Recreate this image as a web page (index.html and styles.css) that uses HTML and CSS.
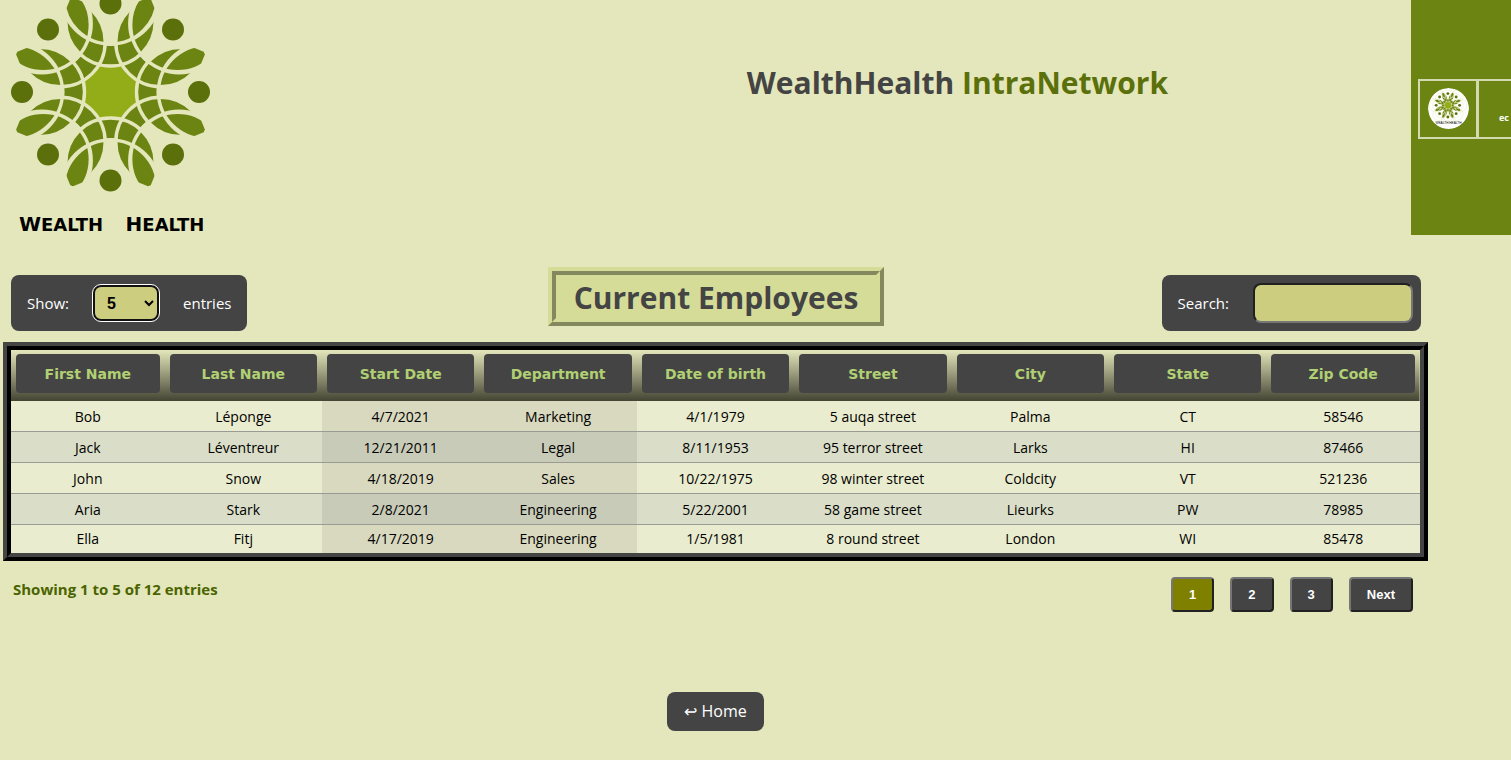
FILE: index.html
```html
<!DOCTYPE html>
<html lang="en">
<head>
<meta charset="utf-8">
<title>WealthHealth IntraNetwork</title>
<link rel="stylesheet" href="styles.css">
</head>
<body>
<header class="header">
  <svg class="logo" viewBox="0 0 220 235" role="img" aria-label="Wealth Health">
    <defs>
      <mask id="lune-mask">
        <circle cx="70.7" cy="0" r="44.7" fill="#fff"/>
        <circle cx="97" cy="0" r="51" fill="#000"/>
      </mask>
      <circle id="lune" cx="70.7" cy="0" r="44.7" mask="url(#lune-mask)"/>
      <circle id="ring-low" cx="70.7" cy="0" r="44.7"/>
      <circle id="ring-high" cx="95" cy="0" r="47"/>
      <path id="leaf" transform="rotate(22.5)" d="M58 0A47 47 0 0 0 93 10L101.500 1.500L101.500 -1.500L93 -10A47 47 0 0 0 58 0Z"/>
      <g id="flower">
        <circle r="29" fill="#93ad18"/>
        <g fill="#6c8512">
          <use href="#lune"/><use href="#lune" transform="rotate(45)"/><use href="#lune" transform="rotate(90)"/><use href="#lune" transform="rotate(135)"/><use href="#lune" transform="rotate(180)"/><use href="#lune" transform="rotate(225)"/><use href="#lune" transform="rotate(270)"/><use href="#lune" transform="rotate(315)"/>
        </g>
        <g class="flower-rings">
          <use href="#ring-low"/><use href="#ring-low" transform="rotate(45)"/><use href="#ring-low" transform="rotate(90)"/><use href="#ring-low" transform="rotate(135)"/><use href="#ring-low" transform="rotate(180)"/><use href="#ring-low" transform="rotate(225)"/><use href="#ring-low" transform="rotate(270)"/><use href="#ring-low" transform="rotate(315)"/>
        </g>
        <g fill="#6c8512">
          <use href="#leaf"/><use href="#leaf" transform="rotate(45)"/><use href="#leaf" transform="rotate(90)"/><use href="#leaf" transform="rotate(135)"/><use href="#leaf" transform="rotate(180)"/><use href="#leaf" transform="rotate(225)"/><use href="#leaf" transform="rotate(270)"/><use href="#leaf" transform="rotate(315)"/>
        </g>
        <g class="flower-rings">
          <use href="#ring-high"/><use href="#ring-high" transform="rotate(45)"/><use href="#ring-high" transform="rotate(90)"/><use href="#ring-high" transform="rotate(135)"/><use href="#ring-high" transform="rotate(180)"/><use href="#ring-high" transform="rotate(225)"/><use href="#ring-high" transform="rotate(270)"/><use href="#ring-high" transform="rotate(315)"/>
        </g>
        <g fill="#5b700b">
          <circle cx="88.5" r="11"/><circle cx="-88.5" r="11"/><circle cy="88.5" r="11"/><circle cy="-88.5" r="11"/>
          <circle cx="62.5" cy="62.5" r="11"/><circle cx="-62.5" cy="62.5" r="11"/><circle cx="62.5" cy="-62.5" r="11"/><circle cx="-62.5" cy="-62.5" r="11"/>
        </g>
      </g>
    </defs>
    <use href="#flower" x="110.5" y="92"/>
    <g class="wordmark">
      <text x="61" y="231">W<tspan class="small">EALTH</tspan></text>
      <text x="165" y="231">H<tspan class="small">EALTH</tspan></text>
    </g>
  </svg>
  <h1 class="site-title">WealthHealth <span class="accent">IntraNetwork</span></h1>
  <div class="banner">
    <div class="banner-cell">
      <svg class="badge" viewBox="-130 -130 260 260" aria-hidden="true">
        <circle r="130" fill="#fff"/>
        <use href="#flower" transform="translate(-4 -20) scale(.84)"/>
        <text class="badge-text" y="98">WEALTH HEALTH</text>
      </svg>
    </div>
    <div class="banner-cell banner-text">ec</div>
  </div>
</header>
<main class="main">
  <div class="toolbar">
    <div class="side">
      <div class="panel">
        <label for="count">Show:</label>
        <select id="count" class="count"><option>5</option><option>10</option><option>25</option></select>
        <span>entries</span>
      </div>
    </div>
    <h2 class="title">Current Employees</h2>
    <div class="side side-end">
      <div class="panel panel-search">
        <label for="search">Search:</label>
        <input id="search" class="search" type="search">
      </div>
    </div>
  </div>
  <table class="table">
    <colgroup><col class="edge"><col><col><col><col><col><col><col><col class="edge"></colgroup>
    <thead>
      <tr><th><span>First Name</span></th><th><span>Last Name</span></th><th><span>Start Date</span></th><th><span>Department</span></th><th><span>Date of birth</span></th><th><span>Street</span></th><th><span>City</span></th><th><span>State</span></th><th><span>Zip Code</span></th></tr>
    </thead>
    <tbody>
      <tr><td>Bob</td><td>Léponge</td><td>4/7/2021</td><td>Marketing</td><td>4/1/1979</td><td>5 auqa street</td><td>Palma</td><td>CT</td><td>58546</td></tr>
      <tr><td>Jack</td><td>Léventreur</td><td>12/21/2011</td><td>Legal</td><td>8/11/1953</td><td>95 terror street</td><td>Larks</td><td>HI</td><td>87466</td></tr>
      <tr><td>John</td><td>Snow</td><td>4/18/2019</td><td>Sales</td><td>10/22/1975</td><td>98 winter street</td><td>Coldcity</td><td>VT</td><td>521236</td></tr>
      <tr><td>Aria</td><td>Stark</td><td>2/8/2021</td><td>Engineering</td><td>5/22/2001</td><td>58 game street</td><td>Lieurks</td><td>PW</td><td>78985</td></tr>
      <tr><td>Ella</td><td>Fitj</td><td>4/17/2019</td><td>Engineering</td><td>1/5/1981</td><td>8 round street</td><td>London</td><td>WI</td><td>85478</td></tr>
    </tbody>
  </table>
  <div class="footer">
    <p class="info">Showing 1 to 5 of 12 entries</p>
    <nav class="pages" aria-label="Pages">
      <button class="page current" type="button">1</button>
      <button class="page" type="button">2</button>
      <button class="page" type="button">3</button>
      <button class="page" type="button">Next</button>
    </nav>
  </div>
  <a class="home" href="#">↩ Home</a>
</main>
</body>
</html>
```
FILE: styles.css
```css
* { box-sizing: border-box; }

body {
  margin: 0;
  background: #e4e7bb;
  color: #000;
  font-family: "Segoe UI", "Open Sans", "Noto Sans", sans-serif;
  font-size: 15px;
  overflow-x: hidden;
}

.header {
  display: grid;
  grid-template-columns: 5fr 9fr 100px;
}
.logo { display: block; width: 220px; height: 235px; }
.flower-rings { fill: none; stroke: #e4e7bb; stroke-width: 3.4; }
.wordmark {
  font-family: "DejaVu Sans", sans-serif;
  font-size: 20px;
  font-weight: bold;
  text-anchor: middle;
}
.wordmark .small { font-size: 18px; }

.site-title {
  margin: 61px 0 0;
  font-size: 30px;
  line-height: 44px;
  text-align: center;
  color: #444;
}
.accent { color: #5b700b; }

.banner {
  display: flex;
  align-items: center;
  padding: 0 0 18px 7px;
  overflow: hidden;
  background: #6b8412;
}
.banner-cell {
  display: flex;
  flex: none;
  align-items: center;
  justify-content: center;
  width: 60px;
  height: 60px;
  border: 2px solid #d3dab0;
}
.banner-cell + .banner-cell { margin-left: -1px; }
.badge { width: 41px; height: 41px; border-radius: 50%; }
.badge .flower-rings { stroke: #fff; }
.badge-text { font: 20px "Liberation Sans", sans-serif; text-anchor: middle; }
.banner-text {
  justify-content: flex-start;
  width: 240px;
  padding: 18px 0 0 20px;
  color: #fff;
  font: bold 9px "Open Sans", sans-serif;
}

.main {
  display: flex;
  flex-direction: column;
  padding: 32px 83px 24px 3px;
}

.toolbar {
  display: flex;
  align-items: flex-start;
  padding: 0 7px 0 8px;
}
.side { display: flex; flex: 1; padding-top: 8px; }
.side-end { justify-content: flex-end; }
.panel {
  display: flex;
  align-items: center;
  gap: 24px;
  height: 56px;
  padding: 0 16px;
  border-radius: 8px;
  background: #444;
  color: #fff;
}
.panel-search { padding-right: 8px; }
.count {
  width: 66px;
  height: 36px;
  padding: 0 0 0 8px;
  border: 2px solid #111;
  border-radius: 8px;
  outline: 1px solid #fff;
  background: #cdcd80;
  color: #000;
  font: bold 16px "Liberation Sans", sans-serif;
}
.search {
  width: 160px;
  height: 40px;
  border: 2px inset #767676;
  border-radius: 8px;
  background: #cdcd80;
  font: 16px "Liberation Sans", sans-serif;
}
.title {
  margin: 0;
  padding: 3px 18px 0;
  border: 8px ridge #d5dc98;
  background: #d5dc98;
  color: #444;
  font-size: 30px;
  line-height: 40px;
}

.table {
  width: 100%;
  margin-top: 11px;
  border: 8px ridge #444;
  border-collapse: separate;
  border-spacing: 0;
  table-layout: fixed;
  text-align: center;
}
.edge { width: 10.9%; }
.table thead tr { background: linear-gradient(#e4e7bb, #444433); }
.table th { padding: 4px 5px 8px; }
.table th span {
  display: block;
  height: 39px;
  border-radius: 4px;
  background: #444;
  color: #b1d073;
  font: bold 14px/41px "Comic Sans MS", "DejaVu Sans", sans-serif;
}
.table td {
  height: 31px;
  padding: 2px 0 0;
  border-bottom: 1px solid #999c94;
  background: #e9ecce;
  font-size: 14px;
  line-height: 28px;
}
.table tr:nth-child(even) td { background: #dadec8; }
.table td:nth-child(3), .table td:nth-child(4) { background: #d9d9bf; }
.table tr:nth-child(even) td:nth-child(3),
.table tr:nth-child(even) td:nth-child(4) { background: #c8cbb8; }
.table tr:last-child td { height: 28px; padding: 0; border-bottom: 0; }

.footer {
  display: flex;
  justify-content: space-between;
  padding: 16px 15px 0 10px;
}
.info { margin: 0; color: #4a6400; font-weight: bold; line-height: 24px; }
.pages { display: flex; gap: 16px; }
.page {
  height: 35px;
  padding: 0 16px;
  border: 2px outset #767676;
  border-radius: 4px;
  background: #444;
  color: #fff;
  font: bold 13px "Liberation Sans", sans-serif;
}
.current { background: #808000; }

.home {
  align-self: center;
  margin-top: 80px;
  padding: 0 17px;
  border-radius: 8px;
  background: #444;
  color: #fff;
  font-size: 16px;
  line-height: 39px;
  text-decoration: none;
}
```
